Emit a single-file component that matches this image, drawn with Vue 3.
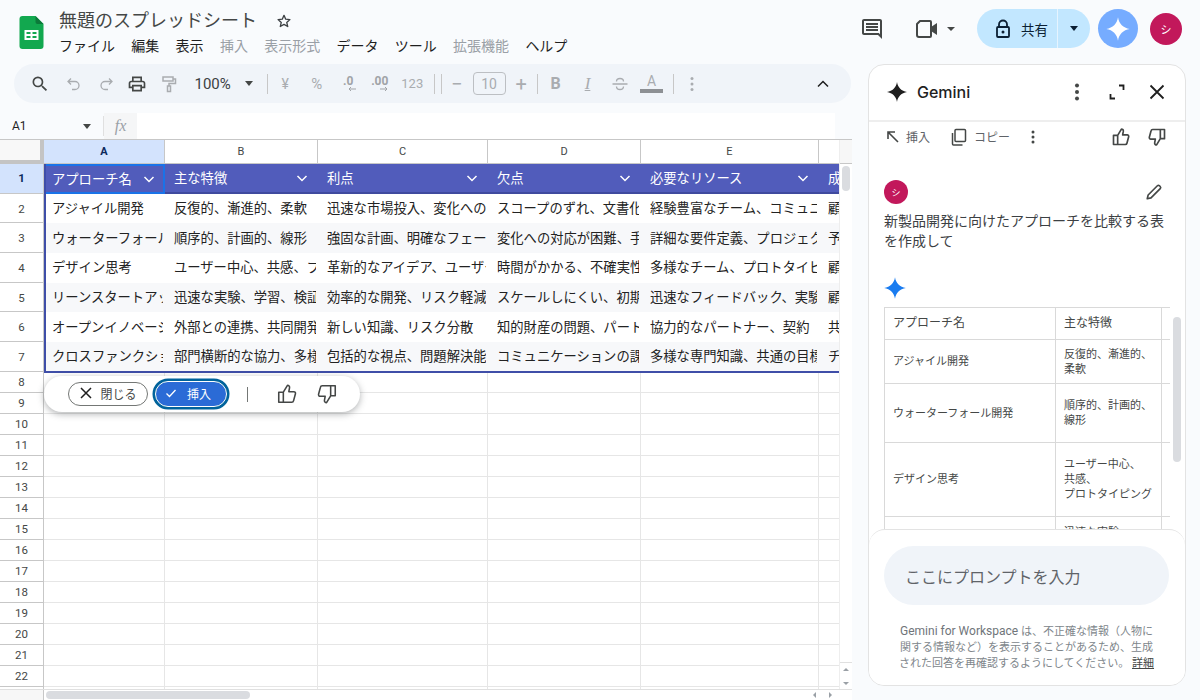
<script setup>
const thumb = 'M8 10v11H3V10zM8 10l4.5-7.5c1.5 0 2.5 1 2.3 2.5L14 9.5h5.5c1.2 0 2 1 1.7 2.2l-2 7.5c-.2 1-1 1.8-2 1.8H8'
const star = 'M12 2C12.8 7.5 16.5 11.2 22 12 16.5 12.8 12.8 16.5 12 22 11.2 16.5 7.5 12.8 2 12 7.5 11.2 11.2 7.5 12 2Z'

const menus = [
  { label: 'ファイル' },
  { label: '編集' },
  { label: '表示' },
  { label: '挿入', off: true },
  { label: '表示形式', off: true },
  { label: 'データ' },
  { label: 'ツール' },
  { label: '拡張機能', off: true },
  { label: 'ヘルプ' }
]

const columns = ['A', 'B', 'C', 'D', 'E', '']
const headers = ['アプローチ名', '主な特徴', '利点', '欠点', '必要なリソース', '成功事例']
const rows = [
  ['アジャイル開発', '反復的、漸進的、柔軟', '迅速な市場投入、変化への対応', 'スコープのずれ、文書化の不足', '経験豊富なチーム、コミュニケーション', '顧客'],
  ['ウォーターフォール開発', '順序的、計画的、線形', '強固な計画、明確なフェーズ', '変化への対応が困難、手戻り', '詳細な要件定義、プロジェクト管理', '予算'],
  ['デザイン思考', 'ユーザー中心、共感、プロトタイピング', '革新的なアイデア、ユーザー満足', '時間がかかる、不確実性', '多様なチーム、プロトタイピング', '顧客'],
  ['リーンスタートアップ', '迅速な実験、学習、検証', '効率的な開発、リスク軽減', 'スケールしにくい、初期の', '迅速なフィードバック、実験環境', '顧客'],
  ['オープンイノベーション', '外部との連携、共同開発', '新しい知識、リスク分散', '知的財産の問題、パートナー', '協力的なパートナー、契約', '共同'],
  ['クロスファンクショナル', '部門横断的な協力、多様な視点', '包括的な視点、問題解決能力', 'コミュニケーションの課題', '多様な専門知識、共通の目標', 'チーム']
]
const emptyRows = Array.from({ length: 16 }, (_, i) => i + 8)

const chatRows = [
  { name: 'アプローチ名', text: '主な特徴', cls: 'h-head' },
  { name: 'アジャイル開発', text: '反復的、漸進的、\n柔軟', cls: 'h-1' },
  { name: 'ウォーターフォール開発', text: '順序的、計画的、\n線形', cls: 'h-2' },
  { name: 'デザイン思考', text: 'ユーザー中心、\n共感、\nプロトタイピング', cls: 'h-3' },
  { name: 'リーンスタートアップ', text: '迅速な実験、\n学習、\n検証', cls: 'h-4' }
]
</script>

<template>
  <div class="page">
    <header class="topbar">
      <svg class="logo" width="25" height="33" viewBox="0 0 24 33">
        <path d="M3 0h13l8 8v22a3 3 0 0 1-3 3H3a3 3 0 0 1-3-3V3a3 3 0 0 1 3-3z" fill="#12a84f" />
        <path d="M16 0l8 8h-6a2 2 0 0 1-2-2z" fill="#0c7a3a" />
        <path d="M5 14h14v10H5zM7 16v2h4v-2zM13 16v2h4v-2zM7 20v2h4v-2zM13 20v2h4v-2z" fill="#fff" fill-rule="evenodd" />
      </svg>
      <div class="doc">
        <div class="doc-title">
          <span>無題のスプレッドシート</span>
          <svg class="title-star" width="16" height="16" viewBox="0 0 24 24"><path d="M12 3.5l2.6 5.8 6.3.6-4.8 4.2 1.5 6.2L12 17l-5.6 3.3 1.5-6.2-4.8-4.2 6.3-.6z" fill="none" stroke="#3c4043" stroke-width="2" stroke-linejoin="round" /></svg>
        </div>
        <nav class="menu">
          <span v-for="m in menus" :key="m.label" :class="{ off: m.off }">{{ m.label }}</span>
        </nav>
      </div>
      <div class="top-actions">
        <svg class="comment" width="24" height="24" viewBox="0 0 24 24"><path d="M20 2H4c-1.100 0-2 .9-2 2v12c0 1.100.9 2 2 2h14l4 4V4c0-1.100-.9-2-2-2zm0 15.170L18.830 16H4V4h16v13.170zM6 12h12v2H6zm0-3h12v2H6zm0-3h12v2H6z" fill="#444746" /></svg>
        <div class="meet">
          <svg width="24" height="22" viewBox="0 0 24 22"><path d="M5 3h10a1 1 0 0 1 1 1v14a1 1 0 0 1-1 1H4a2 2 0 0 1-2-2V6z" fill="none" stroke="#444746" stroke-width="2" stroke-linejoin="round" /><path d="M16 9l6-4v12l-6-4z" fill="#444746" /></svg>
          <i class="caret small"></i>
        </div>
        <div class="share">
          <div class="share-main">
            <svg width="16" height="20" viewBox="0 0 16 20"><path d="M4 8V5.500a4 4 0 0 1 8 0V8" fill="none" stroke="#0b1f33" stroke-width="1.800" /><rect x="2" y="8" width="12" height="10" rx="1" fill="none" stroke="#0b1f33" stroke-width="1.800" /><circle cx="8" cy="13" r="1.500" fill="#0b1f33" /></svg>
            <span>共有</span>
          </div>
          <div class="share-more"><i class="caret dark"></i></div>
        </div>
        <div class="gem-btn">
          <svg width="28" height="28" viewBox="0 0 24 24"><path :d="star" fill="#fff" /></svg>
        </div>
        <div class="avatar big">シ</div>
      </div>
    </header>

    <div class="main">
      <section class="left">
        <div class="toolbar">
          <span class="tb"><svg width="20" height="20" viewBox="0 0 24 24"><path d="M15.500 14h-.79l-.28-.27A6.471 6.471 0 0 0 16 9.500 6.500 6.500 0 1 0 9.500 16c1.610 0 3.090-.59 4.230-1.570l.27.28v.79l5 4.990L20.490 19l-4.990-5zm-6 0C7.010 14 5 11.990 5 9.500S7.010 5 9.500 5 14 7.010 14 9.500 11.990 14 9.500 14z" fill="#444746" /></svg></span>
          <span class="tb undo"><svg width="16" height="16" viewBox="0 0 16 16"><path d="M5 2.500L2 5.500l3 3M2.500 5.500h6.500a4 4 0 0 1 0 8H6" fill="none" stroke="#a9acb0" stroke-width="1.300" /></svg></span>
          <span class="tb"><svg width="16" height="16" viewBox="0 0 16 16"><path d="M11 2.500l3 3-3 3M13.500 5.500H7a4 4 0 0 0 0 8h3" fill="none" stroke="#a9acb0" stroke-width="1.300" /></svg></span>
          <span class="tb"><svg width="20" height="20" viewBox="0 0 24 24"><path d="M19 8h-1V3H6v5H5c-1.660 0-3 1.340-3 3v6h4v4h12v-4h4v-6c0-1.660-1.340-3-3-3zM8 5h8v3H8V5zm8 14H8v-4h8v4zm4-4h-2v-2H6v2H4v-4c0-.55.45-1 1-1h14c.55 0 1 .45 1 1v4z" fill="#444746" /></svg></span>
          <span class="tb"><svg width="18" height="18" viewBox="0 0 18 18"><path d="M3 2h10v4H3zM13 4h2.500v4.500H9V11M7.500 11h3v5.500h-3z" fill="none" stroke="#a9acb0" stroke-width="1.500" /></svg></span>
          <span class="zoom-val">100%<i class="caret"></i></span>
          <i class="tb-div first"></i>
          <span class="tb txt">¥</span>
          <span class="tb txt pct">%</span>
          <span class="tb txt dec"><b>.0</b><svg width="10" height="6" viewBox="0 0 10 6"><path d="M9 3H2M4 1L2 3l2 2" fill="none" stroke="#a0a3a7" /></svg></span>
          <span class="tb txt dec"><b>.00</b><svg width="10" height="6" viewBox="0 0 10 6"><path d="M1 3h7M6 1l2 2-2 2" fill="none" stroke="#a0a3a7" /></svg></span>
          <span class="tb txt num">123</span>
          <i class="tb-div pair-a"></i>
          <i class="tb-div pair-b"></i>
          <span class="tb txt sign">−</span>
          <span class="size-box">10</span>
          <span class="tb txt sign">+</span>
          <i class="tb-div after-plus"></i>
          <span class="tb w32 txt bold">B</span>
          <span class="tb w32 txt italic">I</span>
          <span class="tb w32"><svg width="18" height="18" viewBox="0 0 18 18"><path d="M1.500 9h15M5.500 6.500c0-2 1.500-3 3.500-3s3.500 1 3.500 3M5.500 11.500c0 2 1.500 3 3.500 3s3.500-1 3.500-3" fill="none" stroke="#a9acb0" stroke-width="1.300" /></svg></span>
          <span class="tb w32 txt color-a">A<i></i></span>
          <i class="tb-div before-more"></i>
          <span class="tb"><svg width="16" height="16" viewBox="0 0 16 16"><g fill="#a9acb0"><circle cx="8" cy="2.500" r="1.500" /><circle cx="8" cy="8" r="1.500" /><circle cx="8" cy="13.500" r="1.500" /></g></svg></span>
          <svg class="collapse" width="14" height="14" viewBox="0 0 14 14"><path d="M2 9.500l5-5 5 5" fill="none" stroke="#1f1f1f" stroke-width="1.500" /></svg>
        </div>

        <div class="formula">
          <div class="name-box">A1<i class="caret"></i></div>
          <div class="fx">fx</div>
          <div class="fx-input"></div>
        </div>

        <div class="sheet">
          <div class="sheet-body">
            <div class="grid">
              <div class="row col-row">
                <div class="corner"></div>
                <div v-for="(c, i) in columns" :key="i" class="col-head" :class="{ on: c === 'A' }">{{ c }}</div>
              </div>
              <div class="data">
                <div class="row head-row">
                  <div class="row-num on">1</div>
                  <div v-for="(h, i) in headers" :key="h" class="cell" :class="{ active: i === 0 }">
                    <span class="cell-text">{{ h }}</span>
                    <svg v-if="i < 5" class="chev" width="14" height="14" viewBox="0 0 14 14"><path d="M2.500 5l4.500 4.500L11.500 5" fill="none" stroke="#fff" stroke-width="1.500" /></svg>
                  </div>
                </div>
                <div v-for="(r, idx) in rows" :key="idx" class="row body-row" :class="{ zebra: idx % 2 === 1 }">
                  <div class="row-num">{{ idx + 2 }}</div>
                  <div v-for="(v, i) in r" :key="i" class="cell"><span class="cell-text">{{ v }}</span></div>
                </div>
              </div>
              <div v-for="n in emptyRows" :key="n" class="row empty-row">
                <div class="row-num">{{ n }}</div>
                <div v-for="c in 6" :key="c" class="cell"></div>
              </div>
            </div>
            <div class="vscroll">
              <div class="v-top"></div>
              <div class="v-thumb"></div>
              <div class="v-arrows">
                <span class="tri up"></span>
                <span class="tri down"></span>
              </div>
            </div>
          </div>
          <div class="hscroll">
            <div class="h-gap"></div>
            <div class="h-thumb"></div>
            <div class="h-arrows">
              <span class="tri left-tri"></span>
              <span class="tri right-tri"></span>
            </div>
          </div>

          <div class="popup">
            <button class="btn-close">
              <svg width="14" height="14" viewBox="0 0 14 14"><path d="M2 2l10 10M12 2L2 12" stroke="#1f1f1f" stroke-width="1.500" /></svg>
              <span>閉じる</span>
            </button>
            <button class="btn-insert">
              <svg width="12" height="12" viewBox="0 0 12 12"><path d="M1.500 6.500l3 3 6-6.500" fill="none" stroke="#fff" stroke-width="1.300" /></svg>
              <span>挿入</span>
            </button>
            <i class="pop-div"></i>
            <svg class="pop-thumb" width="22" height="22" viewBox="0 0 24 24"><path :d="thumb" fill="none" stroke="#444746" stroke-width="1.700" stroke-linejoin="round" /></svg>
            <svg class="pop-thumb" width="22" height="22" viewBox="0 0 24 24"><path :d="thumb" fill="none" stroke="#444746" stroke-width="1.700" stroke-linejoin="round" transform="rotate(180 12 12)" /></svg>
          </div>
        </div>
      </section>

      <aside class="panel">
        <div class="panel-head">
          <svg width="24" height="24" viewBox="0 0 24 24"><path :d="star" fill="#1f1f1f" /></svg>
          <span class="panel-title">Gemini</span>
          <svg class="p-dots" width="20" height="20" viewBox="0 0 20 20"><g fill="#444746"><circle cx="10" cy="3.500" r="2" /><circle cx="10" cy="10" r="2" /><circle cx="10" cy="16.500" r="2" /></g></svg>
          <svg class="p-expand" width="16" height="16" viewBox="0 0 16 16"><path d="M1.500 10v4.500H6M10 1.500h4.500V6" fill="none" stroke="#1f1f1f" stroke-width="1.800" /></svg>
          <svg class="p-close" width="16" height="16" viewBox="0 0 16 16"><path d="M1.500 1.500l13 13M14.500 1.500l-13 13" stroke="#1f1f1f" stroke-width="1.800" /></svg>
        </div>

        <div class="chat">
          <div class="chat-actions">
            <svg width="14" height="14" viewBox="0 0 14 14"><path d="M2 9V2h7M2 2l10 10" fill="none" stroke="#444746" stroke-width="1.600" /></svg>
            <span class="act-text first">挿入</span>
            <svg class="copy-ic" width="16" height="18" viewBox="0 0 16 18"><path d="M5 1.500h8.500a1 1 0 0 1 1 1v10a1 1 0 0 1-1 1H5a1 1 0 0 1-1-1v-10a1 1 0 0 1 1-1zM1.500 5v11a1 1 0 0 0 1 1h9" fill="none" stroke="#444746" stroke-width="1.500" /></svg>
            <span class="act-text">コピー</span>
            <svg class="act-dots" width="14" height="14" viewBox="0 0 14 14"><g fill="#444746"><circle cx="7" cy="2" r="1.500" /><circle cx="7" cy="7" r="1.500" /><circle cx="7" cy="12" r="1.500" /></g></svg>
            <svg class="act-up" width="20" height="20" viewBox="0 0 24 24"><path :d="thumb" fill="none" stroke="#444746" stroke-width="2" stroke-linejoin="round" /></svg>
            <svg class="act-down" width="20" height="20" viewBox="0 0 24 24"><path :d="thumb" fill="none" stroke="#444746" stroke-width="2" stroke-linejoin="round" transform="rotate(180 12 12)" /></svg>
          </div>

          <div class="user-line">
            <div class="avatar">シ</div>
            <svg width="18" height="18" viewBox="0 0 24 24"><path d="M3 21l1.200-5L16.500 3.700a2 2 0 0 1 2.800 0l1 1a2 2 0 0 1 0 2.800L8 19.800z" fill="none" stroke="#444746" stroke-width="2.200" stroke-linejoin="round" /></svg>
          </div>
          <p class="prompt">新製品開発に向けたアプローチを比較する表を作成して</p>
          <svg class="blue-star" width="26" height="26" viewBox="0 0 24 24"><path :d="star" fill="#1a7cf0" /></svg>

          <div class="chat-table">
            <div v-for="r in chatRows" :key="r.name" class="chat-row" :class="r.cls">
              <div class="c-name">{{ r.name }}</div>
              <div class="c-text">{{ r.text }}</div>
              <div class="c-more"></div>
            </div>
          </div>
          <div class="chat-scroll"></div>
        </div>

        <div class="composer">
          <div class="prompt-input">ここにプロンプトを入力</div>
          <p class="notice">
            <span class="line"><span class="brand">Gemini for Workspace</span> は、不正確な情報（人物に</span>
            <span class="line">関する情報など）を表示することがあるため、生成</span>
            <span class="line">された回答を再確認するようにしてください。 <u>詳細</u></span>
          </p>
        </div>
      </aside>
    </div>
  </div>
</template>

<style>
html, body { margin: 0; background: #f9fbfd; }
</style>

<style scoped>
.page {
  width: 1200px;
  height: 700px;
  overflow: hidden;
  background: #f9fbfd;
  color: #1f1f1f;
  font-family: Roboto, "Noto Sans CJK JP", sans-serif;
}
.topbar {
  height: 64px;
  display: flex;
  align-items: flex-start;
  box-sizing: border-box;
  padding: 0 18px 0 19px;
}
.logo { margin-top: 16px; flex: none; }
.doc { margin-left: 15px; padding-top: 8px; }
.doc-title {
  display: flex;
  align-items: center;
  gap: 19px;
  font-size: 18px;
  line-height: 26px;
  color: #444746;
}
.menu {
  display: flex;
  gap: 16.3px;
  font-size: 14px;
  line-height: 22px;
  margin: 1px 0 0;
  color: #1f1f1f;
}
.menu .off { color: #9aa0a6; }
.top-actions {
  margin-left: auto;
  display: flex;
  align-items: center;
  padding-top: 9px;
}
.comment { margin-right: 31px; }
.meet { display: flex; align-items: center; gap: 8px; margin-right: 22px; }
.caret {
  display: inline-block;
  width: 0;
  height: 0;
  border-left: 4.5px solid transparent;
  border-right: 4.5px solid transparent;
  border-top: 5px solid #444746;
}
.caret.small { border-width: 4px 4px 0; border-top-color: #444746; }
.caret.dark { border-top-color: #0b1f33; }
.share {
  display: flex;
  width: 113px;
  height: 39px;
  border-radius: 20px;
  overflow: hidden;
  background: #c2e7ff;
  margin-right: 8px;
}
.share-main {
  flex: 1;
  display: flex;
  align-items: center;
  gap: 10px;
  padding-left: 18px;
  font-size: 13.5px;
  color: #0b1f33;
  border-right: 1px solid #e6f4ff;
}
.share-more { width: 32px; display: flex; align-items: center; justify-content: center; }
.gem-btn {
  width: 40px;
  height: 39px;
  border-radius: 50%;
  background: #76acff;
  display: flex;
  align-items: center;
  justify-content: center;
  margin-right: 12px;
}
.avatar {
  width: 24px;
  height: 24px;
  border-radius: 50%;
  background: #c2185b;
  color: #fff;
  font-size: 9px;
  display: flex;
  align-items: center;
  justify-content: center;
}
.avatar.big { width: 32px; height: 32px; font-size: 11px; }

.main { display: flex; height: 636px; }
.left { width: 852px; flex: none; display: flex; flex-direction: column; }

.toolbar {
  height: 39px;
  flex: none;
  margin-left: 14px;
  margin-right: 1px;
  padding-left: 10px;
  border-radius: 20px;
  background: #f0f4f9;
  display: flex;
  align-items: center;
  color: #a9acb0;
}
.tb {
  flex: none;
  width: 31.5px;
  height: 24px;
  display: flex;
  align-items: center;
  justify-content: center;
}
.tb.w32 { width: 32px; }
.tb.undo { margin-left: 3px; }
.txt { font-size: 14px; color: #a9acb0; }
.pct { font-size: 15px; }
.num { font-size: 13px; margin-left: 1px; }
.dec { flex-direction: column; font-size: 12px; line-height: 10px; }
.dec b { font-weight: 700; color: #a0a3a7; }
.dec svg { margin-left: 8px; }
.sign { font-size: 20px; font-weight: 400; }
.bold { font-weight: 700; font-size: 16px; }
.italic { font-style: italic; font-family: "Liberation Serif", serif; font-size: 17px; text-decoration: underline; }
.color-a { flex-direction: column; font-size: 14px; line-height: 15px; }
.color-a i { display: block; width: 23px; height: 4px; background: #8d9094; margin-top: 0; }
.zoom-val {
  flex: none;
  width: 76px;
  margin-left: 3px;
  padding: 0 11px 0 7px;
  box-sizing: border-box;
  display: flex;
  align-items: center;
  justify-content: space-between;
  font-size: 15px;
  color: #3c4043;
}
.tb-div { flex: none; width: 1px; height: 20px; background: #c7c7c7; margin: 0 2px; }
.tb-div.first { margin: 0 2px 0 3px; }
.tb-div.pair-a { margin: 0 0 0 6px; }
.tb-div.pair-b { margin: 0 -1px 0 6px; }
.tb-div.after-plus { margin: 0 1.5px 0 0; }
.tb-div.before-more { margin: 0 3px 0 5px; }
.size-box {
  flex: none;
  width: 31px;
  height: 21px;
  border: 1px solid #bcbfc3;
  border-radius: 4px;
  display: flex;
  align-items: center;
  justify-content: center;
  font-size: 14px;
  color: #a9acb0;
}
.collapse { margin-left: auto; margin-right: 21px; }

.formula {
  height: 26px;
  margin-top: 10px;
  margin-right: 17px;
  display: flex;
  flex: none;
  font-size: 12px;
}
.name-box {
  width: 104px;
  box-sizing: border-box;
  padding: 0 12px;
  display: flex;
  align-items: center;
  justify-content: space-between;
  border-right: 1px solid #e0e0e0;
  margin: 3px 0;
  color: #1f1f1f;
}
.fx {
  width: 33px;
  display: flex;
  align-items: center;
  justify-content: center;
  font-family: "Liberation Serif", serif;
  font-style: italic;
  font-size: 16px;
  color: #9aa0a6;
  background: #f5f6f7;
}
.fx-input { flex: 1; background: #fff; }

.sheet {
  position: relative;
  flex: 1;
  min-height: 0;
  display: flex;
  flex-direction: column;
  border-top: 1px solid #c7c7c7;
  box-sizing: border-box;
  background: #fff;
}
.sheet-body { flex: 1; min-height: 0; display: flex; }
.grid { flex: 1; min-width: 0; overflow: hidden; }
.row {
  display: grid;
  grid-template-columns: 44px 121px 153px 170px 153px 178px 150px;
  width: 969px;
}
.col-row { height: 24px; }
.corner {
  background: #f8f8f8;
  border-right: 4px solid #c4c4c4;
  border-bottom: 4px solid #c4c4c4;
  box-sizing: border-box;
}
.col-head {
  display: flex;
  align-items: center;
  justify-content: center;
  font-size: 11px;
  color: #444746;
  border-right: 1px solid #c7c7c7;
  border-bottom: 1px solid #c7c7c7;
  box-sizing: border-box;
}
.col-head.on { background: #d3e3fd; color: #0b2a5c; font-weight: 700; }
.data { position: relative; }
.data::after {
  content: "";
  position: absolute;
  left: 44px;
  top: 0;
  width: 900px;
  bottom: -1px;
  border: 2px solid #3f4ea8;
  border-top: 0;
  pointer-events: none;
}
.row-num {
  background: #fff;
  border-right: 1px solid #c7c7c7;
  border-bottom: 1px solid #c7c7c7;
  box-sizing: border-box;
  padding-top: 1px;
  display: flex;
  align-items: center;
  justify-content: center;
  font-size: 11.5px;
  color: #444746;
}
.row-num.on { background: #d3e3fd; color: #0b2a5c; font-weight: 700; padding-top: 0; }
.head-row, .body-row { height: 29.7px; }
.cell {
  display: flex;
  align-items: center;
  min-width: 0;
  box-sizing: border-box;
  padding-left: 9px;
  font-size: 13.3px;
}
.row-num + .cell { padding-left: 8px; }
.cell-text { flex: 1; min-width: 0; overflow: hidden; white-space: nowrap; margin-right: 2px; }
.head-row .cell {
  background: #515cbb;
  color: #fff;
  border-bottom: 2px solid #3f4a9e;
}
.head-row .cell.active { outline: 2px solid #1a73e8; outline-offset: -2px; border-bottom: 0; }
.chev { flex: none; margin-right: 9px; }
.body-row .cell { background: #fff; color: #222; padding-bottom: 2px; }
.body-row.zebra .cell { background: #f7f8fa; }
.empty-row { height: 21px; }
.empty-row .cell { border-right: 1px solid #e6e6e6; border-bottom: 1px solid #e6e6e6; }

.vscroll {
  width: 13px;
  flex: none;
  display: flex;
  flex-direction: column;
  background: #fff;
  border-left: 1px solid #eee;
  box-sizing: border-box;
}
.v-top { height: 24px; background: #f7f7f7; border-bottom: 1px solid #c7c7c7; box-sizing: border-box; }
.v-thumb { width: 8px; height: 25px; margin: 2px 0 0 2px; border-radius: 4px; background: #dadce0; }
.v-arrows {
  margin-top: auto;
  display: flex;
  flex-direction: column;
  align-items: center;
  gap: 11px;
  padding: 5px 0 4px;
  border-top: 1px solid #e0e0e0;
}
.tri { display: block; width: 0; height: 0; border: 3px solid transparent; }
.tri.up { border-bottom-color: #9aa0a6; border-top-width: 0; }
.tri.down { border-top-color: #9aa0a6; border-bottom-width: 0; }
.tri.left-tri { border-right-color: #9aa0a6; border-left-width: 0; }
.tri.right-tri { border-left-color: #9aa0a6; border-right-width: 0; }
.hscroll {
  height: 10px;
  flex: none;
  display: flex;
  align-items: center;
  border-top: 1px solid #e0e0e0;
  background: #fff;
}
.h-gap { width: 44px; height: 100%; background: #f7f7f7; border-right: 1px solid #c7c7c7; box-sizing: border-box; }
.h-thumb { width: 204px; height: 8px; margin-left: 2px; border-radius: 4px; background: #dadce0; }
.h-arrows { margin-left: auto; display: flex; gap: 13px; padding-right: 20px; }

.popup {
  position: absolute;
  left: 44px;
  top: 236px;
  width: 316px;
  height: 36px;
  border-radius: 18px;
  background: #fff;
  box-shadow: 0 2px 7px rgba(60, 64, 67, 0.4);
  display: flex;
  align-items: center;
  padding-left: 24px;
  box-sizing: border-box;
}
.btn-close {
  width: 80px;
  height: 24px;
  padding: 0 0 2px;
  border: 1px solid #747775;
  border-radius: 12px;
  background: #fff;
  display: flex;
  align-items: center;
  justify-content: center;
  gap: 7px;
  font: 12px Roboto, "Noto Sans CJK JP", sans-serif;
  color: #444746;
}
.btn-insert {
  width: 70px;
  height: 24px;
  margin-left: 8px;
  padding: 0 0 2px 9px;
  border: 0;
  border-radius: 12px;
  background: #2b6bd6;
  outline: 1px solid #fff;
  box-shadow: 0 0 0 3.5px #00639b;
  display: flex;
  align-items: center;
  gap: 10px;
  font: 12px Roboto, "Noto Sans CJK JP", sans-serif;
  color: #fff;
}
.pop-div { width: 1px; height: 15px; background: #747775; margin: 0 28px 0 21px; }
.pop-thumb + .pop-thumb { margin-left: 18px; }

.panel {
  flex: none;
  width: 318px;
  height: 622px;
  margin-left: 16px;
  box-sizing: border-box;
  background: #fff;
  border: 1px solid #e3e3e3;
  border-radius: 16px;
  display: flex;
  flex-direction: column;
  overflow: hidden;
}
.panel-head {
  height: 57px;
  flex: none;
  display: flex;
  align-items: center;
  padding: 0 0 1px 16px;
  border-bottom: 2px solid #eeeeee;
  box-sizing: border-box;
}
.panel-title { margin-left: 8px; font-size: 16px; font-weight: 500; font-family: Inter, Roboto, sans-serif; }
.p-dots { margin-left: auto; }
.p-expand { margin-left: 22px; }
.p-close { margin: 0 20px 0 24px; }

.chat {
  position: relative;
  flex: 1;
  min-height: 0;
  overflow: hidden;
  padding: 0 0 0 15px;
}
.chat-actions {
  display: flex;
  align-items: center;
  height: 27px;
  margin-top: 1px;
  font-size: 12px;
  color: #5f6368;
  padding-left: 2px;
}
.act-text.first { margin-left: 6px; }
.copy-ic { margin: 0 7px 0 21px; }
.act-dots { margin-left: 16px; }
.act-up { margin-left: 71px; }
.act-down { margin-left: 16px; }
.user-line {
  display: flex;
  justify-content: space-between;
  align-items: center;
  margin-top: 30px;
  padding-right: 22px;
}
.prompt {
  margin: 7px 0 0;
  width: 285px;
  font-size: 14px;
  line-height: 20px;
  color: #3c4043;
}
.blue-star { display: block; margin: 24px 0 0 -2px; }
.chat-table {
  margin-top: 6px;
  width: 285px;
  overflow: hidden;
  border-top: 1px solid #d9d9d9;
  border-left: 1px solid #d9d9d9;
}
.chat-row {
  display: grid;
  grid-template-columns: 171px 106px 100px;
  width: 377px;
  border-bottom: 1px solid #d9d9d9;
  box-sizing: border-box;
}
.c-name, .c-text {
  border-right: 1px solid #d9d9d9;
  display: flex;
  align-items: center;
  box-sizing: border-box;
  padding-left: 8px;
  font-size: 11px;
  line-height: 15px;
  color: #444746;
  white-space: pre-line;
}
.h-head { height: 32px; }
.h-head .c-name, .h-head .c-text { font-size: 12px; }
.h-1 { height: 44px; }
.h-2 { height: 59px; }
.h-3 { height: 74px; }
.h-4 { height: 62px; }
.chat-scroll {
  position: absolute;
  left: 304px;
  top: 195px;
  width: 8px;
  height: 145px;
  border-radius: 4px;
  background: #dadce0;
}
.composer {
  flex: none;
  height: 156px;
  box-sizing: border-box;
  border-top: 1px solid #e3e3e3;
  border-radius: 16px 16px 0 0;
  padding: 16px 16px 0 15px;
  background: #fff;
}
.prompt-input {
  height: 59px;
  border-radius: 30px;
  background: #f0f4f9;
  display: flex;
  align-items: center;
  padding-left: 21px;
  font-size: 16px;
  color: #5f6368;
}
.notice {
  margin: 18px 0 0;
  text-align: center;
  font-size: 11px;
  line-height: 16px;
  color: #80868b;
}
.notice .line { display: block; white-space: nowrap; }
.notice .brand { font-size: 12px; color: #70757a; }
.notice u { color: #444746; }
</style>
